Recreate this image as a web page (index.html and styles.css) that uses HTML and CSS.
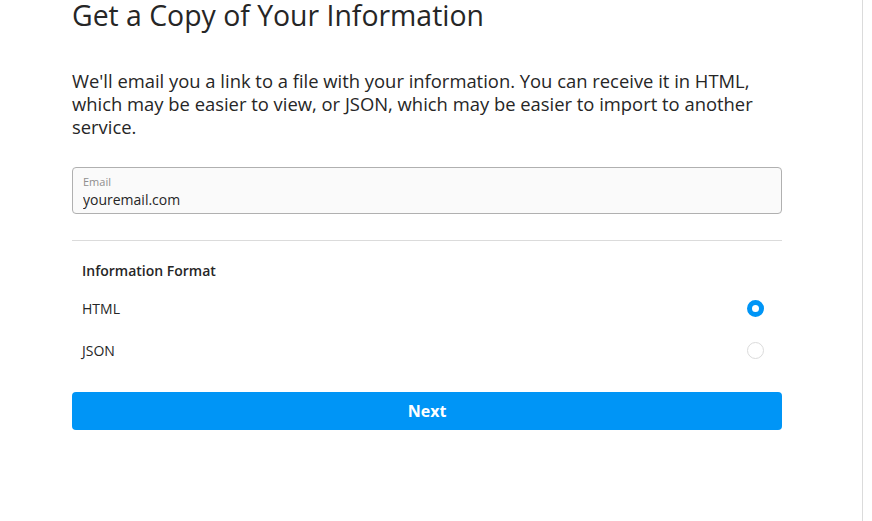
FILE: index.html
```html
<!DOCTYPE html>
<html lang="en">
<head>
    <meta charset="UTF-8">
    <meta name="viewport" content="width=device-width, initial-scale=1.0">
    <title>Get a Copy of Your Information</title>
    <link rel="stylesheet" href="styles.css">
</head>
<body>
    <div class="page">
        <div class="content">
            <h1 class="title">Get a Copy of Your Information</h1>
            <p class="intro">We'll email you a link to a file with your information. You can receive it in HTML, which may be easier to view, or JSON, which may be easier to import to another service.</p>

            <div class="email-field">
                <label for="email">Email</label>
                <input type="text" id="email" value="youremail.com">
            </div>

            <hr class="divider">

            <div class="format-section">
                <div class="format-title">Information Format</div>
                <label class="format-option">
                    <span>HTML</span>
                    <input type="radio" name="format" value="html" checked>
                    <span class="radio"></span>
                </label>
                <label class="format-option">
                    <span>JSON</span>
                    <input type="radio" name="format" value="json">
                    <span class="radio"></span>
                </label>
            </div>

            <button class="btn-next">Next</button>
        </div>
    </div>
</body>
</html>
```

FILE: styles.css
```css
html, body {
    margin: 0;
    padding: 0;
    background: #fff;
}
body {
    font-family: "Open Sans", "Noto Sans", sans-serif;
    color: #262626;
}
.page {
    width: 863px;
    min-height: 100vh;
    border-right: 1px solid #dbdbdb;
    box-sizing: border-box;
}
.content {
    width: 710px;
    margin-left: 72px;
}
.title {
    margin: 0;
    padding-top: 1px;
    font-size: 28.4px;
    font-weight: 400;
    line-height: 28px;
}
.intro {
    margin: 40px 0 0;
    font-size: 18.4px;
    line-height: 23px;
}
.email-field {
    margin-top: 29px;
    height: 47px;
    box-sizing: border-box;
    border: 1px solid #b0b0b0;
    border-radius: 4px;
    background: #fafafa;
    padding: 7px 10px 0;
}
.email-field label {
    display: block;
    font-size: 11px;
    line-height: 14px;
    color: #8e8e8e;
}
.email-field input {
    display: block;
    width: 100%;
    border: none;
    background: transparent;
    padding: 0;
    margin: 1px 0 0;
    font-family: inherit;
    font-size: 14px;
    line-height: 20px;
    color: #262626;
    outline: none;
}
.divider {
    margin: 26px 0 0;
    border: none;
    border-top: 1px solid #dbdbdb;
}
.format-section {
    padding: 21px 0 0 10px;
}
.format-title {
    font-size: 14px;
    font-weight: 600;
    line-height: 18px;
}
.format-option {
    display: flex;
    align-items: center;
    justify-content: space-between;
    height: 42px;
    font-size: 14px;
    padding-right: 18px;
    cursor: pointer;
}
.format-option:first-of-type {
    margin-top: 7px;
}
.format-option input {
    display: none;
}
.radio {
    width: 17px;
    height: 17px;
    border-radius: 50%;
    box-sizing: border-box;
    border: 1.5px solid #dbdbdb;
}
.format-option input:checked + .radio {
    border: 5.5px solid #0095f6;
}
.btn-next {
    display: block;
    width: 100%;
    height: 38px;
    margin-top: 21px;
    border: none;
    border-radius: 4px;
    background: #0095f6;
    color: #fff;
    font-family: inherit;
    font-size: 16px;
    font-weight: 700;
    cursor: pointer;
}
```
